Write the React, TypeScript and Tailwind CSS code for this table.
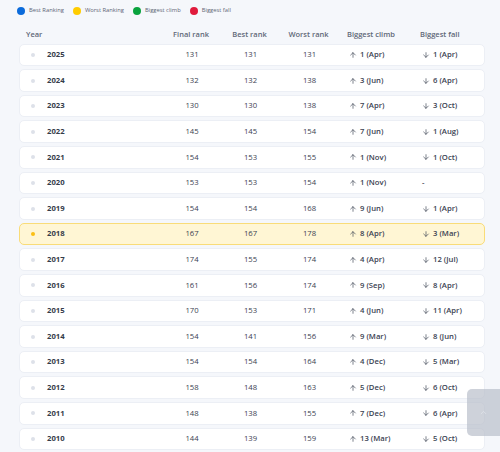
import { ArrowUp, ArrowDown, ChevronUp } from "lucide-react";

type Row = {
  year: number;
  final: number;
  best: number;
  worst: number;
  climb: string | null;
  fall: string | null;
  current?: boolean;
};

const ROWS: Row[] = [
  { year: 2025, final: 131, best: 131, worst: 131, climb: "1 (Apr)", fall: "1 (Apr)" },
  { year: 2024, final: 132, best: 132, worst: 138, climb: "3 (Jun)", fall: "6 (Apr)" },
  { year: 2023, final: 130, best: 130, worst: 138, climb: "7 (Apr)", fall: "3 (Oct)" },
  { year: 2022, final: 145, best: 145, worst: 154, climb: "7 (Jun)", fall: "1 (Aug)" },
  { year: 2021, final: 154, best: 153, worst: 155, climb: "1 (Nov)", fall: "1 (Oct)" },
  { year: 2020, final: 153, best: 153, worst: 154, climb: "1 (Nov)", fall: null },
  { year: 2019, final: 154, best: 154, worst: 168, climb: "9 (Jun)", fall: "1 (Apr)" },
  { year: 2018, final: 167, best: 167, worst: 178, climb: "8 (Apr)", fall: "3 (Mar)", current: true },
  { year: 2017, final: 174, best: 155, worst: 174, climb: "4 (Apr)", fall: "12 (Jul)" },
  { year: 2016, final: 161, best: 156, worst: 174, climb: "9 (Sep)", fall: "8 (Apr)" },
  { year: 2015, final: 170, best: 153, worst: 171, climb: "4 (Jun)", fall: "11 (Apr)" },
  { year: 2014, final: 154, best: 141, worst: 156, climb: "9 (Mar)", fall: "8 (Jun)" },
  { year: 2013, final: 154, best: 154, worst: 164, climb: "4 (Dec)", fall: "5 (Mar)" },
  { year: 2012, final: 158, best: 148, worst: 163, climb: "5 (Dec)", fall: "6 (Oct)" },
  { year: 2011, final: 148, best: 138, worst: 155, climb: "7 (Dec)", fall: "6 (Apr)" },
  { year: 2010, final: 144, best: 139, worst: 159, climb: "13 (Mar)", fall: "5 (Oct)" },
];

const LEGEND = [
  { label: "Best Ranking", dot: "bg-[#0b6bdb]" },
  { label: "Worst Ranking", dot: "bg-[#ffcc00]" },
  { label: "Biggest climb", dot: "bg-[#0aa33e]" },
  { label: "Biggest fall", dot: "bg-[#e01b3c]" },
];

const COLS = "grid grid-cols-[143px_58px_59px_59px_73px_1fr] items-center";

export default function App() {
  return (
    <div
      className="relative min-h-screen overflow-hidden bg-[#f5f7fb] pl-[19px] pr-[15px]"
      style={{ fontFamily: '"Open Sans", "Noto Sans", sans-serif' }}
    >
      {/* Legend */}
      <div className="-ml-[2px] mt-[7px] flex h-[8px] items-center gap-[9px]">
        {LEGEND.map((l) => (
          <div key={l.label} className="flex items-center gap-[4px]">
            <span className={`h-[8px] w-[8px] rounded-full ${l.dot}`} />
            <span className="text-[5.8px] leading-none text-[#5d6675]">{l.label}</span>
          </div>
        ))}
      </div>

      {/* Header */}
      <div className={`${COLS} mt-[14px] h-[10px] text-[7.5px] font-semibold leading-[10px] text-[#5f6878]`}>
        <div className="pl-[7px]">Year</div>
        <div className="text-center">Final rank</div>
        <div className="text-center">Best rank</div>
        <div className="text-center">Worst rank</div>
        <div className="pl-[9px]">Biggest climb</div>
        <div className="pl-[9px]">Biggest fall</div>
      </div>

      {/* Rows */}
      <div className="mt-[4.7px] flex flex-col gap-[3px]">
        {ROWS.map((r) => (
          <div
            key={r.year}
            className={`${COLS} h-[22.6px] rounded-[5px] border text-[7.7px] font-medium text-[#3b4252] ${
              r.current ? "border-[#f9dc78] bg-[#fff6d4]" : "border-[#eceff5] bg-white"
            }`}
          >
            <div className="flex items-center">
              <span
                className={`ml-[11px] h-[4px] w-[4px] rounded-full ${
                  r.current ? "bg-[#fbbf14]" : "bg-[#dde1e9]"
                }`}
              />
              <span className="ml-[12px] font-bold text-[#353c4a]">{r.year}</span>
            </div>
            <div className="text-center">{r.final}</div>
            <div className="text-center">{r.best}</div>
            <div className="text-center">{r.worst}</div>
            <div className="flex items-center gap-[3px] pl-[10px] font-semibold">
              {r.climb ? (
                <>
                  <ArrowUp size={8} strokeWidth={2} />
                  <span>{r.climb}</span>
                </>
              ) : (
                <span>-</span>
              )}
            </div>
            <div className="flex items-center gap-[3px] pl-[10px] font-semibold">
              {r.fall ? (
                <>
                  <ArrowDown size={8} strokeWidth={2} />
                  <span>{r.fall}</span>
                </>
              ) : (
                <span>-</span>
              )}
            </div>
          </div>
        ))}
      </div>

      {/* Scroll to top */}
      <button
        type="button"
        className="absolute right-0 top-[389px] flex h-[47px] w-[33px] items-center justify-center rounded-l-[5px] bg-[#b9bfca]/70 text-[#e8ebf1]"
      >
        <ChevronUp size={9} strokeWidth={1.5} />
      </button>
    </div>
  );
}
